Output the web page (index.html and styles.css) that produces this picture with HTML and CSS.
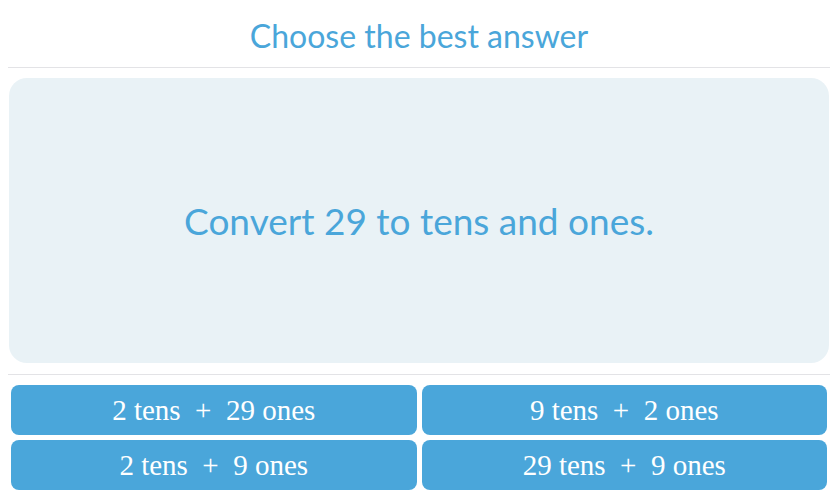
FILE: index.html
```html
<!DOCTYPE html>
<html lang="en">

<head>
    <meta charset="UTF-8">
    <meta name="viewport" content="width=device-width, initial-scale=1.0">
    <title>Quiz</title>
    <link rel="stylesheet" href="styles.css">
</head>

<body>
    <div class="quiz">
        <h1 class="prompt">Choose the best answer</h1>
        <div class="question">
            <p>Convert 29 to tens and ones.</p>
        </div>
        <div class="answers">
            <button class="answer">2 tens &nbsp;+ &nbsp;29 ones</button>
            <button class="answer">9 tens &nbsp;+ &nbsp;2 ones</button>
            <button class="answer">2 tens &nbsp;+ &nbsp;9 ones</button>
            <button class="answer">29 tens &nbsp;+ &nbsp;9 ones</button>
        </div>
    </div>
</body>

</html>
```

FILE: styles.css
```css
body {
    margin: 0 8px;
    font-family: Lato, 'Noto Sans', sans-serif;
    background: white;
}

.quiz {
    width: 822px;
}

.prompt {
    margin: 0;
    padding: 14px 0 10px;
    line-height: 43px;
    font-size: 32px;
    font-weight: normal;
    text-align: center;
    color: #4aa6da;
    border-bottom: 1px solid #e3e3e6;
}

.question {
    margin: 10px 1px 0;
    height: 285px;
    border-radius: 18px;
    background: #e9f2f6;
    display: flex;
    align-items: center;
    justify-content: center;
}

.question p {
    margin: 0;
    font-size: 37px;
    color: #4aa6da;
}

.answers {
    margin-top: 11px;
    border-top: 1px solid #e3e3e6;
    padding: 10px 3px 0;
    display: grid;
    grid-template-columns: 1fr 1fr;
    gap: 5px;
}

.answer {
    height: 50px;
    border: none;
    border-radius: 8px;
    background: #4aa6da;
    color: white;
    font-family: 'Liberation Serif', serif;
    font-size: 29px;
    padding: 0;
}
```
